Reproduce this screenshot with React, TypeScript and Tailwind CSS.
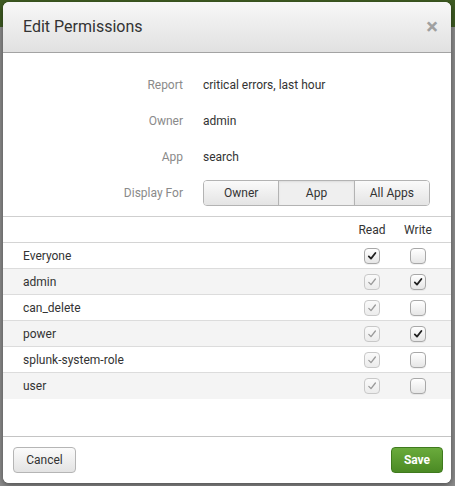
import React, { useState } from 'react';

type Role = { name: string; read: boolean; write: boolean; readLocked: boolean };

const initialRoles: Role[] = [
  { name: 'Everyone', read: true, write: false, readLocked: false },
  { name: 'admin', read: true, write: true, readLocked: true },
  { name: 'can_delete', read: true, write: false, readLocked: true },
  { name: 'power', read: true, write: true, readLocked: true },
  { name: 'splunk-system-role', read: true, write: false, readLocked: true },
  { name: 'user', read: true, write: false, readLocked: true },
];

const Check: React.FC<{ checked: boolean; disabled?: boolean; onClick?: () => void }> = ({
  checked,
  disabled,
  onClick,
}) => (
  <button
    type="button"
    onClick={disabled ? undefined : onClick}
    className={`w-[16px] h-[16px] rounded-[4px] border flex items-center justify-center ${
      disabled
        ? 'border-[#c8c8c8] bg-[linear-gradient(#fafafa,#ececec)]'
        : 'border-[#a8a8a8] bg-[linear-gradient(#ffffff,#e6e6e6)] shadow-[0_1px_0_rgba(0,0,0,0.05)]'
    }`}
  >
    {checked && (
      <svg width="10" height="10" viewBox="0 0 10 10">
        <path
          d="M1.8 5.4 L4 7.6 L8.4 2"
          fill="none"
          stroke={disabled ? '#9a9a9a' : '#222'}
          strokeWidth={disabled ? 1.3 : 1.8}
          strokeLinecap="round"
          strokeLinejoin="round"
        />
      </svg>
    )}
  </button>
);

const App: React.FC = () => {
  const [displayFor, setDisplayFor] = useState<'Owner' | 'App' | 'All Apps'>('App');
  const [roles, setRoles] = useState<Role[]>(initialRoles);

  const toggle = (i: number, key: 'read' | 'write') => {
    setRoles(roles.map((r, idx) => (idx === i ? { ...r, [key]: !r[key] } : r)));
  };

  const info = [
    { label: 'Report', value: 'critical errors, last hour' },
    { label: 'Owner', value: 'admin' },
    { label: 'App', value: 'search' },
  ];

  return (
    <div
      className="w-[455px] h-[486px] overflow-hidden pt-[2px] px-[3px] bg-[linear-gradient(#3e5b22_0px,#3e5b22_27px,#8c8c8c_27px)] text-[#333]"
      style={{ fontFamily: 'Roboto, "Helvetica Neue", Arial, sans-serif' }}
    >
      <div className="w-[448px] h-[481px] bg-white rounded-[6px] shadow-[0_2px_6px_rgba(0,0,0,0.45)] flex flex-col overflow-hidden">
        {/* Header */}
        <div className="h-[51px] shrink-0 flex items-center justify-between pl-[20px] pr-[13px] border-b border-[#a3a3a3] bg-[linear-gradient(#f7f7f7,#e1e1e1)]">
          <h1 className="text-[16px] leading-none text-[#333]">Edit Permissions</h1>
          <button type="button" className="text-[#a0a0a0] text-[22px] font-bold leading-none">
            ×
          </button>
        </div>

        {/* Info */}
        <div className="pt-[19px] pb-[10px] flex flex-col gap-[10px] border-b border-[#cfcfcf] text-[12px]">
          {info.map((row) => (
            <div key={row.label} className="h-[26px] flex items-center">
              <div className="w-[180px] text-right text-[#8a8a8a]">{row.label}</div>
              <div className="ml-[20px] text-[#333]">{row.value}</div>
            </div>
          ))}
          <div className="h-[26px] flex items-center">
            <div className="w-[180px] text-right text-[#8a8a8a]">Display For</div>
            <div className="ml-[20px] flex h-[26px] w-[227px] rounded-[4px] border border-[#b3b3b3] overflow-hidden">
              {(['Owner', 'App', 'All Apps'] as const).map((opt, i) => (
                <button
                  key={opt}
                  type="button"
                  onClick={() => setDisplayFor(opt)}
                  className={`flex-1 text-[12px] text-[#333] ${i > 0 ? 'border-l border-[#b3b3b3]' : ''} ${
                    displayFor === opt
                      ? 'bg-[#efefef] shadow-[inset_0_1px_2px_rgba(0,0,0,0.08)]'
                      : 'bg-[linear-gradient(#fafafa,#e4e4e4)]'
                  }`}
                >
                  {opt}
                </button>
              ))}
            </div>
          </div>
        </div>

        {/* Table */}
        <div className="flex-1 text-[12px]">
          <div className="h-[26px] flex items-center border-b border-[#d4d4d4] pr-[10px]">
            <div className="flex-1" />
            <div className="w-[46px] text-center">Read</div>
            <div className="w-[46px] text-center">Write</div>
          </div>
          {roles.map((r, i) => (
            <div
              key={r.name}
              className={`h-[26px] flex items-center pl-[20px] pr-[10px] ${
                i < roles.length - 1 ? 'border-b border-[#dcdcdc]' : ''
              } ${i % 2 === 1 ? 'bg-[#f4f4f4]' : 'bg-white'}`}
            >
              <div className="flex-1">{r.name}</div>
              <div className="w-[46px] flex justify-center">
                <Check checked={r.read} disabled={r.readLocked} onClick={() => toggle(i, 'read')} />
              </div>
              <div className="w-[46px] flex justify-center">
                <Check checked={r.write} onClick={() => toggle(i, 'write')} />
              </div>
            </div>
          ))}
        </div>

        {/* Footer */}
        <div className="h-[47px] shrink-0 border-t border-[#c4c4c4] flex items-start justify-between pt-[10px] pl-[10px] pr-[8px] bg-white">
          <button
            type="button"
            className="h-[26px] w-[63px] rounded-[4px] border border-[#b5b5b5] bg-[linear-gradient(#fbfbfb,#e3e3e3)] text-[12px] text-[#333]"
          >
            Cancel
          </button>
          <button
            type="button"
            className="h-[26px] w-[52px] rounded-[4px] border border-[#3f7a1e] bg-[linear-gradient(#6aab3c,#4b8a24)] text-[12px] font-bold text-white"
          >
            Save
          </button>
        </div>
      </div>
    </div>
  );
};

export default App;
